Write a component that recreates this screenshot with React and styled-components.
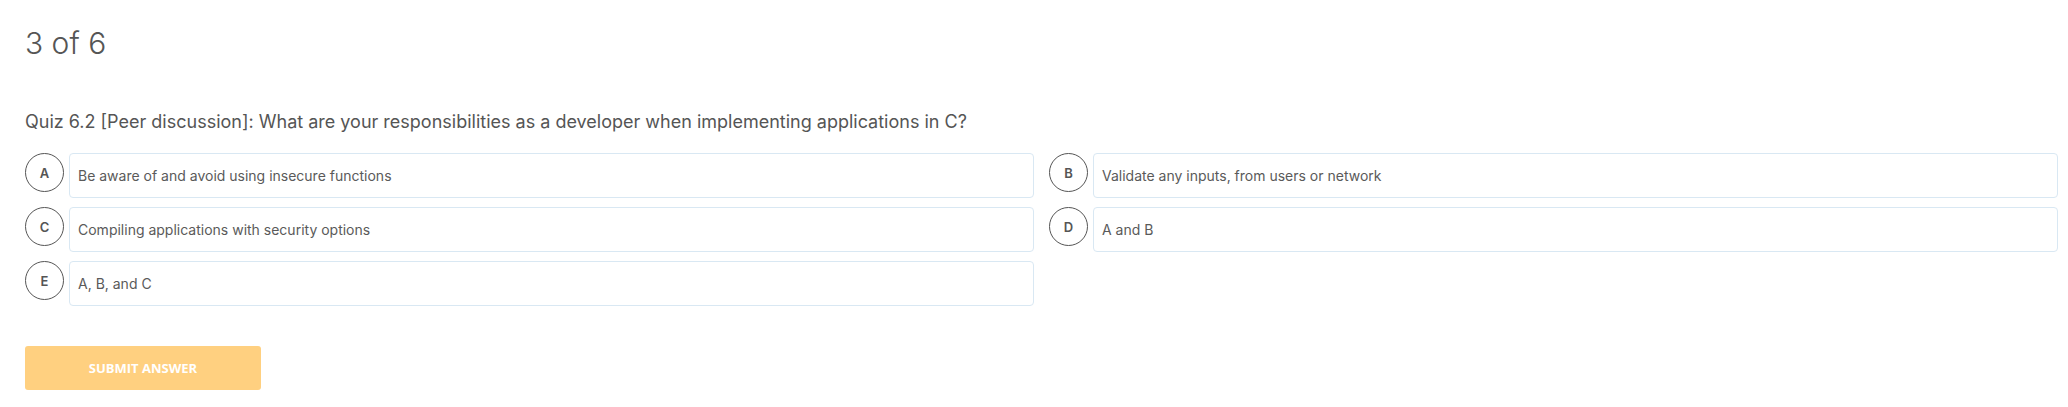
import React, { useState } from "react";
import styled, { createGlobalStyle } from "styled-components";

const GlobalStyle = createGlobalStyle`
  body {
    margin: 0;
    background: #ffffff;
    font-family: Inter, "Noto Sans", sans-serif;
  }
`;

const Page = styled.div`
  padding: 25px 10px 16px 25px;
`;

const Counter = styled.div`
  font-size: 30px;
  font-weight: 300;
  color: #555555;
  line-height: 36px;
`;

const Question = styled.div`
  margin-top: 49px;
  font-size: 18px;
  color: #555555;
  line-height: 24px;
`;

const Options = styled.div`
  display: grid;
  grid-template-columns: 1fr 1fr;
  column-gap: 15px;
  row-gap: 9px;
  margin-top: 19px;
`;

const Option = styled.div`
  display: flex;
  align-items: flex-start;
  gap: 5px;
  cursor: pointer;
`;

const Letter = styled.div`
  flex: 0 0 auto;
  width: 37px;
  height: 37px;
  border-radius: 50%;
  border: 1px solid ${({ selected }) => (selected ? "#f6a623" : "#555555")};
  display: flex;
  align-items: center;
  justify-content: center;
  font-size: 13px;
  font-weight: 600;
  color: #555555;
`;

const Answer = styled.div`
  flex: 1;
  height: 43px;
  display: flex;
  align-items: center;
  padding: 0 8px;
  border: 1px solid #d9e8f3;
  border-radius: 4px;
  font-size: 14px;
  color: #5a5a5a;
`;

const SubmitButton = styled.button`
  margin-top: 40px;
  width: 236px;
  height: 44px;
  border: none;
  border-radius: 3px;
  background: #ffd080;
  color: #ffffff;
  font-family: "Open Sans", sans-serif;
  font-weight: 700;
  font-size: 13px;
  text-transform: uppercase;
  cursor: default;
`;

const options = [
  { key: "A", text: "Be aware of and avoid using insecure functions" },
  { key: "B", text: "Validate any inputs, from users or network" },
  { key: "C", text: "Compiling applications with security options" },
  { key: "D", text: "A and B" },
  { key: "E", text: "A, B, and C" },
];

const App = () => {
  const [selected, setSelected] = useState(null);
  return (
    <Page>
      <GlobalStyle />
      <Counter>3 of 6</Counter>
      <Question>
        Quiz 6.2 [Peer discussion]: What are your responsibilities as a
        developer when implementing applications in C?
      </Question>
      <Options>
        {options.map((option) => (
          <Option key={option.key} onClick={() => setSelected(option.key)}>
            <Letter selected={selected === option.key}>{option.key}</Letter>
            <Answer>{option.text}</Answer>
          </Option>
        ))}
      </Options>
      <SubmitButton disabled={!selected}>Submit answer</SubmitButton>
    </Page>
  );
};

export default App;
